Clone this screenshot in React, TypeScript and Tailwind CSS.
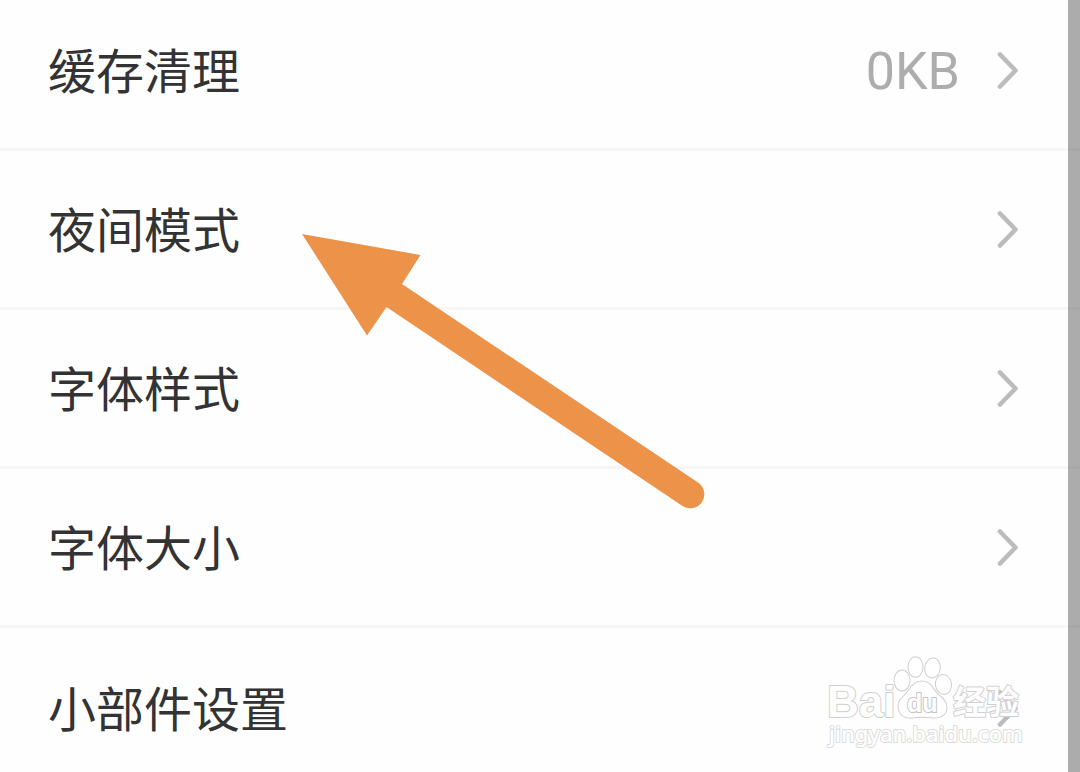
import { clsx } from "clsx";

type SettingItem = {
  title: string;
  value?: string;
};

const items: SettingItem[] = [
  { title: "缓存清理", value: "0KB" },
  { title: "夜间模式" },
  { title: "字体样式" },
  { title: "字体大小" },
  { title: "小部件设置" },
];

function Chevron() {
  return (
    <svg className="w-6 h-10 shrink-0" viewBox="0 0 24 40" fill="none" aria-hidden="true">
      <path
        d="M4 4.5 L19.5 20.5 L4 36.5"
        stroke="#bcbcbc"
        strokeWidth="4.6"
        strokeLinecap="round"
        strokeLinejoin="round"
      />
    </svg>
  );
}

function SettingRow({ item, last }: { item: SettingItem; last: boolean }) {
  return (
    <li className={clsx("h-[159px]", !last && "border-b-3 border-[#f6f6f6]")}>
      <button type="button" className="w-full h-full pl-12 pr-[60px] flex items-center text-left">
        <span className="flex-1 pb-1 text-[48px] leading-[72px] text-[#333333]">{item.title}</span>
        {item.value && (
          <span className="mr-9 pt-1 font-[Roboto,sans-serif] text-[52px] leading-[72px] text-[#adadad]">
            {item.value}
          </span>
        )}
        <Chevron />
      </button>
    </li>
  );
}

function Arrow() {
  return (
    <svg
      className="absolute left-[300px] top-[230px] w-[410px] h-[282px] pointer-events-none"
      viewBox="300 230 410 282"
      aria-hidden="true"
    >
      <path
        d="M302 234 L420.5 255 L402 284 L698 482.5 A14 14 0 0 1 682.5 506 L386.5 307 L367 335.5 Z"
        fill="#ed9349"
      />
    </svg>
  );
}

function Watermark() {
  return (
    <svg
      className="absolute left-[820px] top-[650px] w-[210px] h-[104px] pointer-events-none"
      viewBox="820 650 210 104"
      fill="#ffffff"
      stroke="#d0d0d0"
      strokeWidth="2"
      strokeLinejoin="round"
      paintOrder="stroke"
    >
      <text x="827" y="717" fontFamily="Liberation Sans, sans-serif" fontWeight="700" fontSize="44">
        Bai
      </text>
      <ellipse cx="902" cy="680.5" rx="7.5" ry="10" />
      <ellipse cx="915.5" cy="667" rx="7" ry="9.8" />
      <ellipse cx="932.5" cy="668" rx="7.3" ry="9.5" transform="rotate(8 932.5 668)" />
      <ellipse cx="943.5" cy="684.5" rx="7.5" ry="9.5" transform="rotate(-8 943.5 684.5)" />
      <path d="M922 681.5 C929 681.5 932 687 936 692.5 C941 698 947 701 946.5 708 C946 715 940 718 933 717.5 C926 716.5 918 716.5 912 717.5 C904 718.5 899 714 898.5 707 C898 700 904 697 908 691.5 C912 686 915 681.5 922 681.5 Z" />
      <text
        x="907"
        y="712"
        fontFamily="Liberation Sans, sans-serif"
        fontWeight="700"
        fontSize="25"
        stroke="#c4c4c4"
      >
        du
      </text>
      <text x="953" y="714" fontFamily="Noto Sans CJK SC, sans-serif" fontWeight="700" fontSize="33">
        经验
      </text>
      <text
        x="829"
        y="742"
        fontFamily="Noto Sans, sans-serif"
        fontWeight="500"
        fontSize="22"
        stroke="#dddddd"
      >
        jingyan.baidu.com
      </text>
    </svg>
  );
}

export default function App() {
  return (
    <main className="relative h-screen overflow-hidden bg-[#fefefe] font-['Noto_Sans_CJK_SC',sans-serif]">
      <ul className="-mt-2">
        {items.map((item, index) => (
          <SettingRow key={item.title} item={item} last={index === items.length - 1} />
        ))}
      </ul>
      <Arrow />
      <Watermark />
      <div className="absolute inset-y-0 right-0 w-3 bg-black/32" />
    </main>
  );
}
